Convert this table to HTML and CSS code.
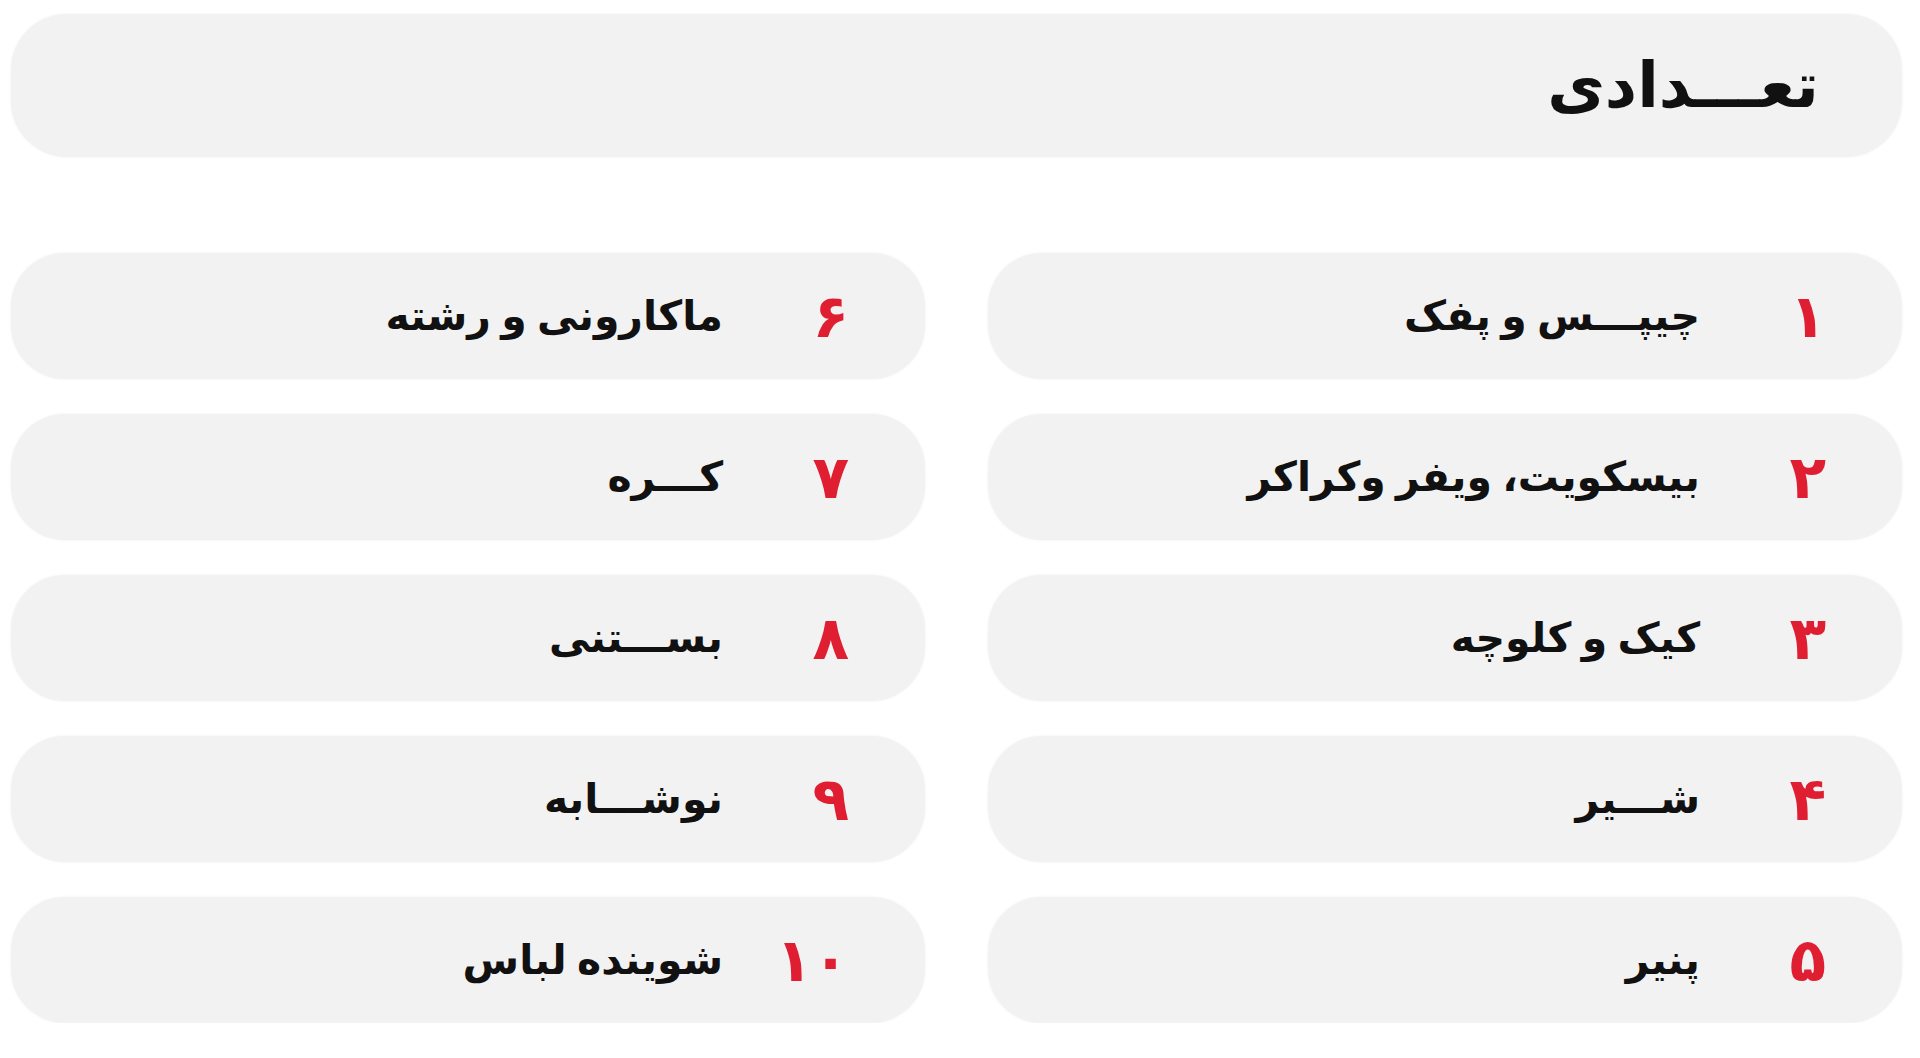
FILE: index.html
```html
<!DOCTYPE html>
<html lang="fa" dir="rtl">
<head>
<meta charset="utf-8">
<title>تعدادی</title>
<link rel="stylesheet" href="styles.css">
</head>
<body>
<main class="page">
  <header class="title-bar">
    <h1 class="title">تعـــدادی</h1>
  </header>
  <section class="list">
    <div class="item"><span class="num">۱</span><span class="label">چیپـــس و پفک</span></div>
    <div class="item"><span class="num">۲</span><span class="label">بیسکویت، ویفر وکراکر</span></div>
    <div class="item"><span class="num">۳</span><span class="label">کیک و کلوچه</span></div>
    <div class="item"><span class="num">۴</span><span class="label">شـــیر</span></div>
    <div class="item"><span class="num">۵</span><span class="label">پنیر</span></div>
    <div class="item"><span class="num">۶</span><span class="label">ماکارونی و رشته</span></div>
    <div class="item"><span class="num">۷</span><span class="label">کـــره</span></div>
    <div class="item"><span class="num">۸</span><span class="label">بســـتنی</span></div>
    <div class="item"><span class="num">۹</span><span class="label">نوشـــابه</span></div>
    <div class="item"><span class="num">۱۰</span><span class="label">شوینده لباس</span></div>
  </section>
</main>
</body>
</html>
```

FILE: styles.css
```css
html, body {
  margin: 0;
  padding: 0;
  background: #ffffff;
}

body {
  font-family: "DejaVu Sans", sans-serif;
  color: #111111;
}

.page {
  padding: 14px 18px 0 11px;
}

.title-bar {
  height: 143px;
  background: #f2f2f2;
  border-radius: 56px;
  box-shadow: 0 0 3px rgba(0, 0, 0, 0.06);
  display: flex;
  align-items: center;
  padding-right: 83px;
}

.title {
  margin: 0;
  font-size: 63px;
  font-weight: 700;
  line-height: 1;
}

.list {
  margin-top: 96px;
  display: grid;
  grid-template-columns: 1fr 1fr;
  grid-template-rows: repeat(5, 126px);
  grid-auto-flow: column;
  column-gap: 63px;
  row-gap: 35px;
}

.item {
  background: #f2f2f2;
  border-radius: 54px;
  box-shadow: 0 0 3px rgba(0, 0, 0, 0.06);
  display: flex;
  align-items: center;
  padding-right: 83px;
}

.num {
  width: 126px;
  margin-right: -7px;
  flex: none;
  color: #e01e32;
  font-size: 60px;
  font-weight: 700;
  line-height: 1;
}

.label {
  font-size: 41px;
  font-weight: 700;
  line-height: 1;
  word-spacing: -4px;
}
```
